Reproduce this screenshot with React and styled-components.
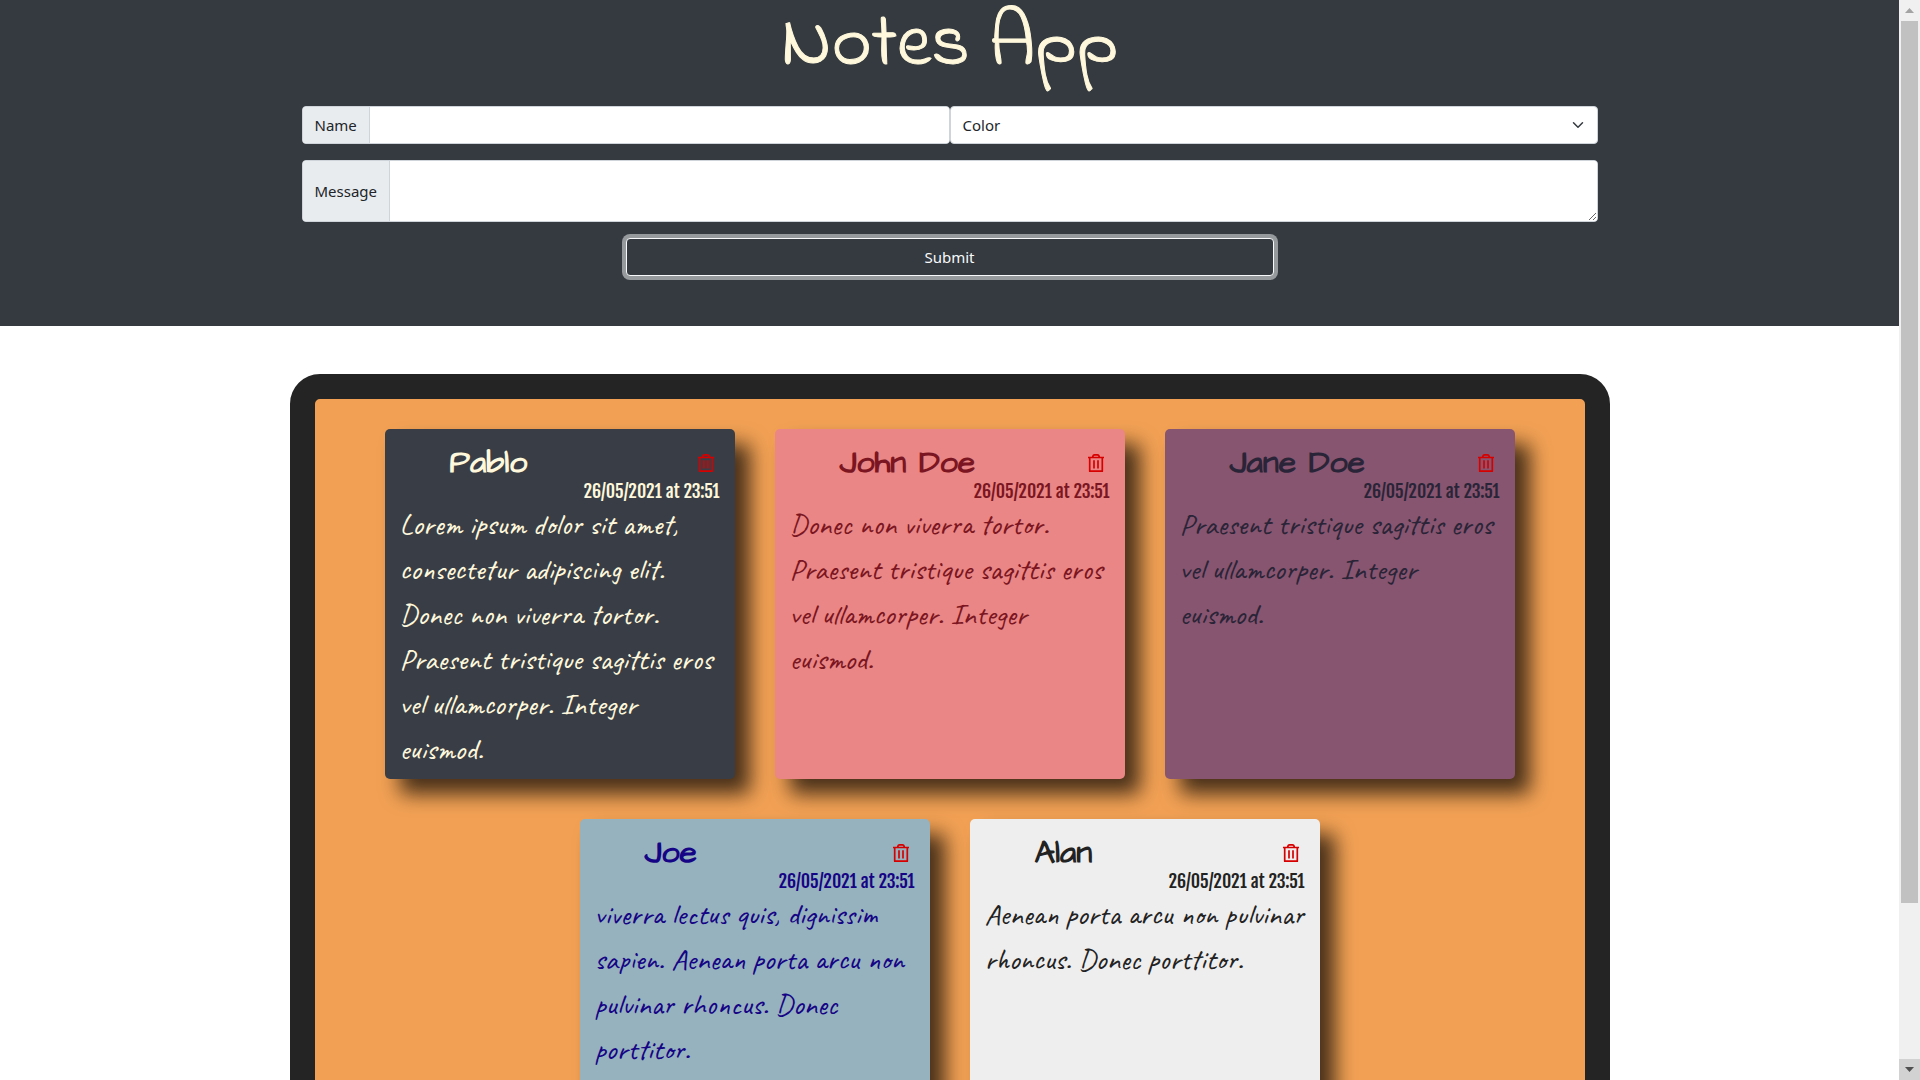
import React, { useState } from "react";
import styled, { createGlobalStyle } from "styled-components";

const GlobalStyle = createGlobalStyle`
  *, *::before, *::after { box-sizing: border-box; }
  body {
    margin: 0;
    background: #fff;
    color: #212529;
    font-family: "Segoe UI", "Noto Sans", sans-serif;
    font-size: 15px;
    line-height: 24px;
  }
`;

const Window = styled.div`
  display: flex;
  height: 100vh;
`;

const Page = styled.div`
  flex: 1;
  min-width: 0;
  overflow-y: auto;
  scrollbar-width: none;
`;

const ScrollBar = styled.div`
  display: flex;
  flex-direction: column;
  width: 21px;
  background: #f0f0f0;
`;

const ScrollArrow = styled.div`
  display: flex;
  align-items: center;
  justify-content: center;
  height: 21px;
  background: ${(p) => (p.$active ? "#d2d2d2" : "#f0f0f0")};
  color: ${(p) => (p.$active ? "#505050" : "#a3a3a3")};
`;

const ScrollTrack = styled.div`
  flex: 1;
  padding: 0 2px;
`;

const ScrollThumb = styled.div`
  height: 85%;
  background: #c1c1c1;
`;

const Header = styled.header`
  background: #343a40;
  padding-bottom: 50px;
`;

const Container = styled.div`
  max-width: 1320px;
  margin: 0 auto;
  padding: 0 12px;
`;

const Title = styled.h1`
  margin: 0 0 14px;
  color: #fff8dc;
  font: 400 76px/92px "Indie Flower", "Lato", cursive;
  -webkit-text-stroke: 1px currentColor;
  text-align: center;
`;

const Form = styled.form`
  display: flex;
  flex-direction: column;
  gap: 16px;
`;

const FieldRow = styled.div`
  display: grid;
  grid-template-columns: 1fr 1fr;
`;

const InputGroup = styled.div`
  display: flex;
  border: 1px solid #ced4da;
  border-radius: 4px;
  background: #fff;
  overflow: hidden;
`;

const GroupLabel = styled.label`
  display: flex;
  align-items: center;
  padding: 6px 12px;
  background: #e9ecef;
  border-right: 1px solid #ced4da;
`;

const TextInput = styled.input`
  flex: 1;
  min-width: 0;
  height: 36px;
  padding: 6px 12px;
  border: 0;
  font: inherit;
`;

const TextArea = styled.textarea`
  flex: 1;
  min-width: 0;
  height: 60px;
  padding: 6px 12px;
  border: 0;
  font: inherit;
  resize: vertical;
`;

const SelectWrap = styled.div`
  display: grid;
  align-items: center;

  & > * { grid-area: 1 / 1; }
  & > svg { justify-self: end; margin-right: 12px; pointer-events: none; }
`;

const Select = styled.select`
  width: 100%;
  height: 38px;
  padding: 6px 36px 6px 12px;
  appearance: none;
  border: 1px solid #ced4da;
  border-radius: 4px;
  background: #fff;
  color: inherit;
  font: inherit;
`;

const SubmitButton = styled.button`
  align-self: center;
  width: 50%;
  height: 38px;
  border: 1px solid #f8f9fa;
  border-radius: 4px;
  background: #343a40;
  color: #f8f9fa;
  font: inherit;
  box-shadow: 0 0 0 4px rgba(248, 249, 250, 0.5);
`;

const Board = styled.main`
  display: flex;
  flex-wrap: wrap;
  justify-content: center;
  gap: 40px;
  max-width: 1320px;
  margin: 48px auto;
  padding: 30px;
  border: 25px solid #242424;
  border-radius: 30px;
  background: #f2a154;
`;

const Card = styled.article`
  width: 350px;
  height: 350px;
  padding: 16px 15px;
  border-radius: 5px;
  background: ${(p) => p.$background};
  color: ${(p) => p.$color};
  box-shadow: 15px 15px 20px rgba(0, 0, 0, 0.7);
`;

const CardHeader = styled.div`
  display: flex;
  align-items: center;
  justify-content: space-between;
  padding: 0 6px 0 50px;
`;

const Author = styled.h2`
  margin: 0;
  font: 700 32px/36px "Architects Daughter", "Lato", cursive;
`;

const DeleteButton = styled.button`
  display: flex;
  padding: 0;
  border: 0;
  background: none;
  color: #d60000;
`;

const DateText = styled.time`
  display: block;
  font: 400 18px/21px "Fjalla One", "Liberation Sans Narrow", "DejaVu Sans Condensed", sans-serif;
  text-align: right;
`;

const Message = styled.p`
  margin: 0;
  font: 400 30px/45px "Caveat", "Lato", cursive;
`;

const ChevronIcon = () => (
  <svg width="16" height="12" viewBox="0 0 16 16" aria-hidden="true">
    <path d="M2 5l6 6 6-6" fill="none" stroke="#343a40" strokeWidth="2" strokeLinecap="round" strokeLinejoin="round" />
  </svg>
);

const TrashIcon = () => (
  <svg width="16" height="20" viewBox="0 0 16 20" fill="none" stroke="currentColor" strokeWidth="1.7" strokeLinejoin="round" aria-hidden="true">
    <path d="M0 4.5h16M1.7 4.5v13.7h12.6V4.5M4.5 4.5Q5 1.8 6.5 1.8h3Q11 1.8 11.5 4.5" />
    <path d="M6 7.2v8.3M10 7.2v8.3" />
  </svg>
);

const ArrowIcon = ({ down }) => (
  <svg width="9" height="5" viewBox="0 0 9 5" aria-hidden="true">
    <path d={down ? "M0 0h9L4.5 5z" : "M0 5h9L4.5 0z"} fill="currentColor" />
  </svg>
);

const initialNotes = [
  { id: 1, name: "Pablo", background: "#393e46", color: "#fff8dc", text: "Lorem ipsum dolor sit amet, consectetur adipiscing elit. Donec non viverra tortor. Praesent tristique sagittis eros vel ullamcorper. Integer euismod." },
  { id: 2, name: "John Doe", background: "#ea8685", color: "#7a1521", text: "Donec non viverra tortor. Praesent tristique sagittis eros vel ullamcorper. Integer euismod." },
  { id: 3, name: "Jane Doe", background: "#87556f", color: "#2a2438", text: "Praesent tristique sagittis eros vel ullamcorper. Integer euismod." },
  { id: 4, name: "Joe", background: "#95b2be", color: "#150485", text: "viverra lectus quis, dignissim sapien. Aenean porta arcu non pulvinar rhoncus. Donec porttitor." },
  { id: 5, name: "Alan", background: "#eeeeee", color: "#222222", text: "Aenean porta arcu non pulvinar rhoncus. Donec porttitor." },
];

function Note({ note, onDelete }) {
  return (
    <Card $background={note.background} $color={note.color}>
      <CardHeader>
        <Author>{note.name}</Author>
        <DeleteButton type="button" aria-label={`Delete note by ${note.name}`} onClick={onDelete}>
          <TrashIcon />
        </DeleteButton>
      </CardHeader>
      <DateText dateTime="2021-05-26T23:51">26/05/2021 at 23:51</DateText>
      <Message>{note.text}</Message>
    </Card>
  );
}

export default function App() {
  const [notes, setNotes] = useState(initialNotes);
  return (
    <Window>
      <GlobalStyle />
      <Page>
        <Header>
          <Container>
            <Title>Notes App</Title>
            <Form onSubmit={(e) => e.preventDefault()}>
              <FieldRow>
                <InputGroup>
                  <GroupLabel htmlFor="name">Name</GroupLabel>
                  <TextInput id="name" type="text" />
                </InputGroup>
                <SelectWrap>
                  <Select aria-label="Color" defaultValue="">
                    <option value="">Color</option>
                  </Select>
                  <ChevronIcon />
                </SelectWrap>
              </FieldRow>
              <InputGroup>
                <GroupLabel htmlFor="message">Message</GroupLabel>
                <TextArea id="message" />
              </InputGroup>
              <SubmitButton type="submit">Submit</SubmitButton>
            </Form>
          </Container>
        </Header>
        <Board>
          {notes.map((note) => (
            <Note key={note.id} note={note} onDelete={() => setNotes(notes.filter((n) => n.id !== note.id))} />
          ))}
        </Board>
      </Page>
      <ScrollBar aria-hidden="true">
        <ScrollArrow><ArrowIcon /></ScrollArrow>
        <ScrollTrack><ScrollThumb /></ScrollTrack>
        <ScrollArrow $active><ArrowIcon down /></ScrollArrow>
      </ScrollBar>
    </Window>
  );
}
